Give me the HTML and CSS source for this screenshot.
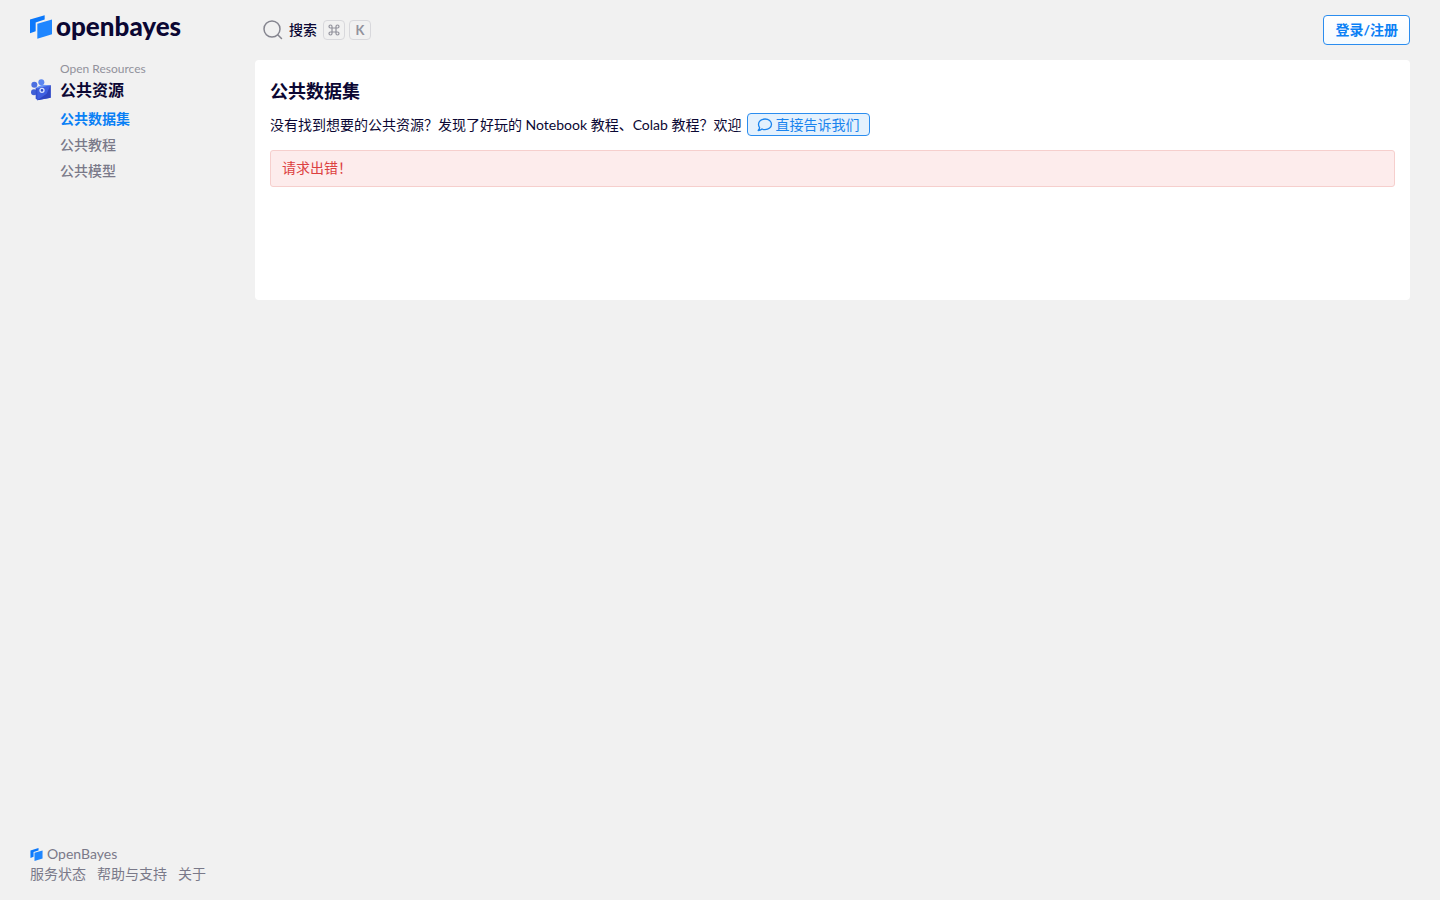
FILE: index.html
```html
<!DOCTYPE html>
<html lang="zh-CN">
	<head>
		<meta charset="utf-8">
		<title>公共数据集 - OpenBayes</title>
		<link rel="stylesheet" href="styles.css">
	</head>
	<body>
		<!--侧边栏-->
		<aside class="sidebar">
			<a class="logo" href="#">
				<svg width="22" height="24" viewBox="0 0 66 71" aria-hidden="true">
					<path fill="#0b78fb" d="M0 13 44 0V13L17 22V48L0 54Z"/>
					<path fill="#1e86ff" d="M22 26 66 13V57L22 71Z"/>
				</svg>
				<span>openbayes</span>
			</a>
			<nav class="menu">
				<div class="menu-en">Open Resources</div>
				<div class="menu-title">
					<svg width="22" height="22" viewBox="0 0 66 66" aria-hidden="true">
						<circle cx="13" cy="17" r="9" fill="#4c6fe0"/>
						<circle cx="34" cy="10" r="9" fill="#5b86f0"/>
						<circle cx="12" cy="40" r="9" fill="#3f5fd6"/>
						<path fill="#6c96f5" d="M17 26 36 17 62 19 24 31Z"/>
						<path fill="#3450cf" d="M17 26 24 29V64L17 59Z"/>
						<path fill="#3f5fe0" d="M22 28 62 18V56L22 64Z"/>
						<path fill="#2f45c0" d="M62 18V56L22 64 50 44Z"/>
						<circle cx="36" cy="34" r="6" fill="#2e49c4" stroke="#d7e2ff" stroke-width="4"/>
					</svg>
					<h2>公共资源</h2>
				</div>
				<ul>
					<li><a class="active" href="#">公共数据集</a></li>
					<li><a href="#">公共教程</a></li>
					<li><a href="#">公共模型</a></li>
				</ul>
			</nav>
			<footer class="footer">
				<a class="footer-brand" href="#">
					<svg width="13" height="13" viewBox="0 0 66 71" aria-hidden="true">
						<path fill="#0b78fb" d="M0 13 44 0V13L17 22V48L0 54Z"/>
						<path fill="#1e86ff" d="M22 26 66 13V57L22 71Z"/>
					</svg>
					<span>OpenBayes</span>
				</a>
				<div class="footer-links">
					<a href="#">服务状态</a>
					<a href="#">帮助与支持</a>
					<a href="#">关于</a>
				</div>
			</footer>
		</aside>

		<!--主体-->
		<div class="main">
			<header class="header">
				<button class="search" type="button">
					<svg width="20" height="20" viewBox="0 0 20 20" fill="none" stroke="#85858f" stroke-width="1.5" stroke-linecap="round" aria-hidden="true">
						<circle cx="9" cy="9" r="8"/>
						<path d="M15 15 18.500 18.500"/>
					</svg>
					<span>搜索</span>
					<span class="keys">
						<kbd>
							<svg width="12" height="12" viewBox="0 0 12 12" fill="none" stroke="#92929c" stroke-width="1.200" aria-label="⌘">
								<path d="M4 4H8V8H4ZM4 4V2.500A1.500 1.500 0 1 0 2.500 4H4M8 4H9.500A1.500 1.500 0 1 0 8 2.500V4M8 8V9.500A1.500 1.500 0 1 0 9.500 8H8M4 8H2.500A1.500 1.500 0 1 0 4 9.500V8"/>
							</svg>
						</kbd>
						<kbd>K</kbd>
					</span>
				</button>
				<button class="login" type="button">登录/注册</button>
			</header>
			<main class="card">
				<h1>公共数据集</h1>
				<p class="intro">
					没有找到想要的公共资源？发现了好玩的 Notebook 教程、Colab 教程？欢迎
					<a class="feedback" href="#">
						<svg width="16" height="14" viewBox="0 0 16 14" fill="none" stroke="currentColor" stroke-width="1.300" stroke-linejoin="round" aria-hidden="true">
							<path d="M8 1C11.700 1 14.500 3.300 14.500 6.300S11.700 11.600 8 11.600C6.900 11.600 5.900 11.400 5 11 4 11.900 2.700 12.500 1.200 12.500 2 11.600 2.500 10.700 2.600 9.600 1.900 8.700 1.500 7.500 1.500 6.300 1.500 3.300 4.300 1 8 1Z"/>
						</svg>
						<span>直接告诉我们</span>
					</a>
				</p>
				<div class="error" role="alert">请求出错！</div>
			</main>
		</div>
	</body>
</html>
```

FILE: styles.css
```css
* {
	box-sizing: border-box;
}
body {
	display: flex;
	min-height: 100vh;
	margin: 0;
	background: #f1f1f1;
	color: #0b0733;
	font-family: Lato, "Noto Sans CJK SC", sans-serif;
	font-size: 14px;
	line-height: 20px;
}
a {
	color: inherit;
	text-decoration: none;
}
button {
	font: inherit;
	color: inherit;
	cursor: pointer;
}
h1, h2, p, ul {
	margin: 0;
	padding: 0;
}
svg {
	display: block;
	flex: none;
}

/* 侧边栏 */
.sidebar {
	display: flex;
	flex-direction: column;
	flex: none;
	width: 255px;
	padding: 12px 30px 16px;
}
.logo {
	display: flex;
	align-items: center;
	gap: 4px;
	height: 30px;
	font-family: Lato, sans-serif;
	font-size: 26px;
	font-weight: 900;
	line-height: 26px;
}
.logo span {
	padding-bottom: 3px;
}
.menu {
	margin-top: 17px;
}
.menu-en {
	padding-left: 30px;
	color: #92929c;
	font-size: 12px;
}
.menu-title {
	display: flex;
	align-items: center;
	gap: 8px;
}
.menu-title h2 {
	font-size: 16px;
	font-weight: 700;
	line-height: 20px;
}
.menu ul {
	display: flex;
	flex-direction: column;
	gap: 6px;
	margin-top: 8px;
	padding-left: 30px;
	color: #7a7989;
	font-weight: 500;
	list-style: none;
}
.menu li {
	height: 20px;
}
.menu .active {
	color: #0a80f5;
	font-weight: 700;
}
.footer {
	margin-top: auto;
	color: #7a7989;
}
.footer-brand {
	display: flex;
	align-items: center;
	gap: 4px;
}
.footer-links {
	display: flex;
	gap: 11px;
}

/* 主体 */
.main {
	flex: 1;
	min-width: 0;
	padding-right: 30px;
}
.header {
	display: flex;
	align-items: center;
	justify-content: space-between;
	height: 60px;
}
.search {
	display: flex;
	align-items: center;
	gap: 6px;
	padding: 0 8px;
	border: 0;
	background: none;
	font-weight: 500;
}
.keys {
	display: flex;
	gap: 4px;
}
kbd {
	display: flex;
	align-items: center;
	justify-content: center;
	width: 22px;
	height: 20px;
	border: 1px solid #d8d8dc;
	border-radius: 4px;
	color: #92929c;
	font-family: Lato, sans-serif;
	font-size: 13px;
	font-weight: 700;
}
.login {
	height: 30px;
	padding: 0 11px;
	border: 1px solid #2b8def;
	border-radius: 4px;
	background: linear-gradient(#fff, #f5fbff);
	color: #0a80f5;
	font-weight: 700;
}
.card {
	min-height: 240px;
	padding: 20px 15px;
	border-radius: 4px;
	background: #fff;
}
.card h1 {
	font-size: 18px;
	font-weight: 700;
	line-height: 22px;
}
.intro {
	display: flex;
	flex-wrap: wrap;
	align-items: center;
	gap: 5px;
	margin-top: 11px;
}
.feedback {
	display: flex;
	align-items: center;
	gap: 3px;
	height: 23px;
	padding: 0 9px;
	border: 1px solid #2b8def;
	border-radius: 4px;
	background: #e4f1fd;
	color: #1a84ee;
}
.error {
	margin-top: 14px;
	padding: 7px 11px 8px;
	border: 1px solid #f6cfcd;
	border-radius: 3px;
	background: #fdecec;
	color: #dc4040;
}
```
